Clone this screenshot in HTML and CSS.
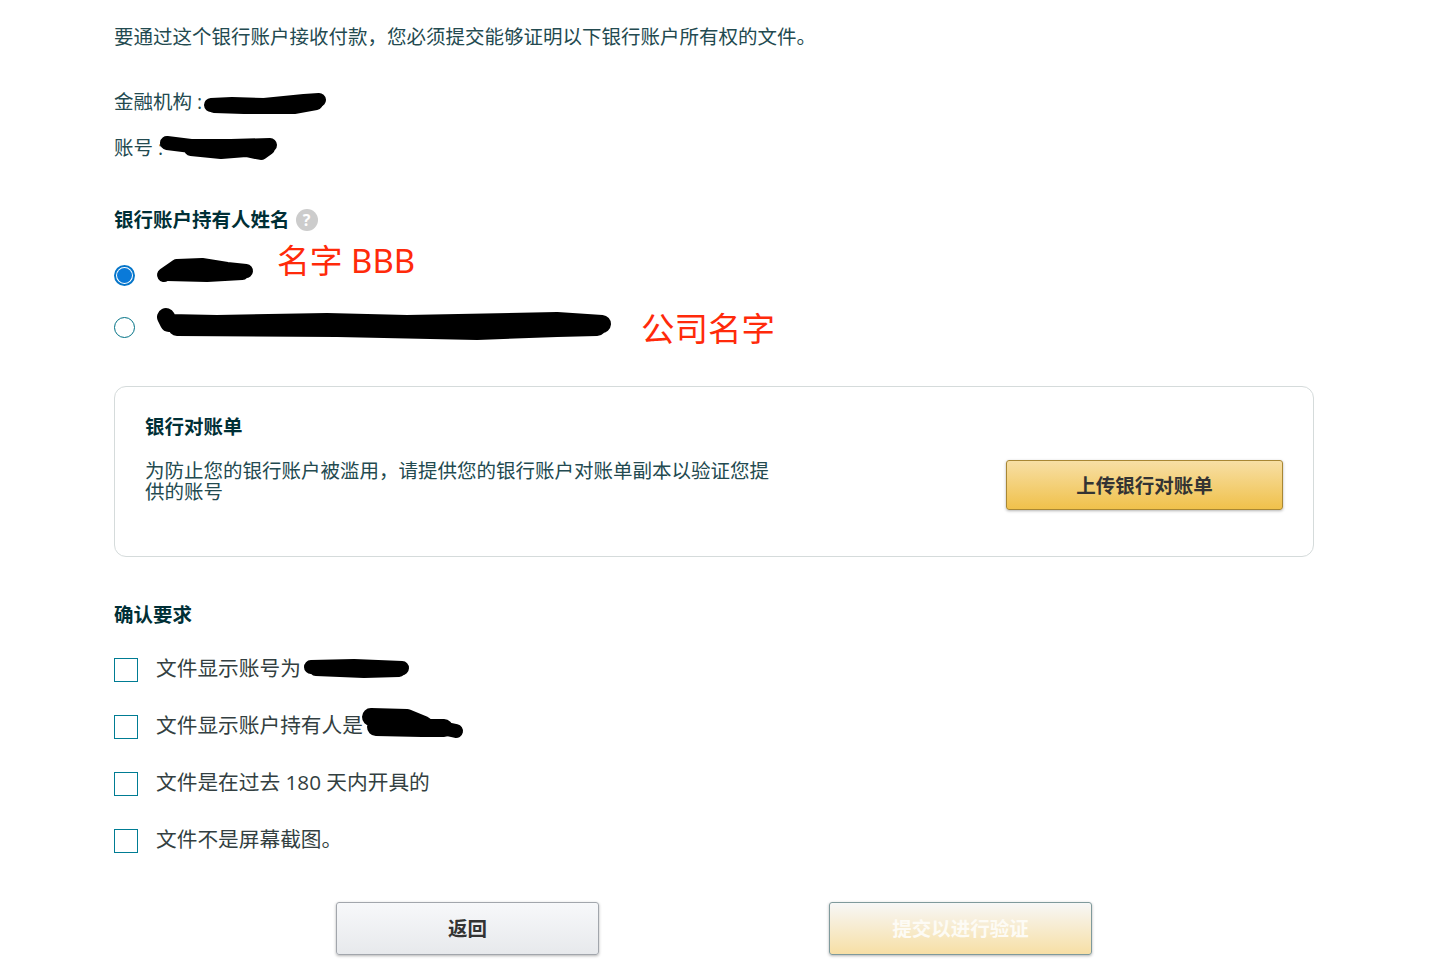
FILE: index.html
```html
<!DOCTYPE html>
<html lang="zh-CN">
<head>
    <meta charset="UTF-8">
    <meta name="viewport" content="width=device-width, initial-scale=1.0">
    <title>银行账户验证</title>
    <link rel="stylesheet" href="styles.css">
</head>
<body>
    <div class="page">
        <p class="intro">要通过这个银行账户接收付款，您必须提交能够证明以下银行账户所有权的文件。</p>

        <div class="info-row institution">
            <span>金融机构 :</span>
            <svg class="scribble" style="margin-left:2px" width="123" height="21" viewBox="0 0 123 21"><path d="M7 13 L28 12 L60 13 L80 11 L100 9 L115 8" /><path d="M10 14 L40 15 L90 15 L112 11" /></svg>
        </div>
        <div class="info-row account">
            <span>账号 :</span>
            <svg class="scribble" style="margin-left:-2px" width="116" height="24" viewBox="0 0 116 24"><path d="M6 7 L30 10 L70 10 L109 9" /><path d="M30 13 L60 16 L85 14 L100 17 L107 12" /></svg>
        </div>

        <h3 class="section-title holder-title">
            银行账户持有人姓名
            <span class="help">?</span>
        </h3>

        <div class="radio-row">
            <input class="radio" type="radio" name="holder" checked>
            <svg class="scribble name-one" width="96" height="24" viewBox="0 0 96 24"><path d="M7 17 L20 8 L45 7 L70 11 L89 13" /><path d="M10 16 L50 17 L85 15" /></svg>
            <span class="note note-one">名字 BBB</span>
        </div>
        <div class="radio-row">
            <input class="radio" type="radio" name="holder">
            <svg class="scribble name-two" width="454" height="32" viewBox="0 0 454 32"><path class="wide" d="M9 9 L12 15 L60 16 L170 14 L250 16 L400 13 L445 16" /><path class="wide" d="M20 19 L180 20 L320 23 L400 20 L440 19" /></svg>
            <span class="note note-two">公司名字</span>
        </div>

        <div class="statement">
            <div class="statement-text">
                <h3 class="section-title">银行对账单</h3>
                <p>为防止您的银行账户被滥用，请提供您的银行账户对账单副本以验证您提供的账号</p>
            </div>
            <button class="btn btn-primary upload">上传银行对账单</button>
        </div>

        <h3 class="section-title confirm-title">确认要求</h3>

        <div class="checks">
            <label class="check-row">
                <input class="check" type="checkbox">
                <span>文件显示账号为</span>
                <svg class="scribble line-one" width="106" height="20" viewBox="0 0 106 20"><path d="M7 9 L50 8 L98 10" /><path d="M12 11 L60 13 L95 12" /></svg>
            </label>
            <label class="check-row">
                <input class="check" type="checkbox">
                <span>文件显示账户持有人是</span>
                <svg class="scribble line-two" width="102" height="30" viewBox="0 0 102 30"><path class="wide" d="M9 9 L45 10 L62 17" /><path class="wide" d="M14 19 L60 20 L82 20" /><path d="M80 20 L94 23" /></svg>
            </label>
            <label class="check-row">
                <input class="check" type="checkbox">
                <span>文件是在过去 180 天内开具的</span>
            </label>
            <label class="check-row">
                <input class="check" type="checkbox">
                <span>文件不是屏幕截图。</span>
            </label>
        </div>

        <div class="actions">
            <button class="btn btn-back">返回</button>
            <button class="btn btn-submit" disabled>提交以进行验证</button>
        </div>
    </div>
</body>
</html>
```

FILE: styles.css
```css
* {
    box-sizing: border-box;
}
body {
    margin: 0;
    background: #ffffff;
    color: #234a50;
    font-family: "Open Sans", "Noto Sans CJK SC", sans-serif;
    font-size: 19.5px;
    line-height: 26px;
    overflow: hidden;
}
.page {
    width: 1200px;
    height: 964px;
    margin-left: 114px;
    padding-top: 24px;
}
p {
    margin: 0;
}
.intro {
    height: 26px;
}
.info-row {
    display: flex;
    align-items: center;
    height: 26px;
}
.institution {
    margin-top: 39px;
}
.account {
    margin-top: 20px;
}
.scribble {
    flex-shrink: 0;
    overflow: visible;
}
.scribble path {
    fill: none;
    stroke: #000000;
    stroke-width: 14px;
    stroke-linecap: round;
    stroke-linejoin: round;
}
.scribble path.wide {
    stroke-width: 18px;
}
.section-title {
    margin: 0;
    color: #002f36;
    font-size: 19.5px;
    font-weight: 700;
    line-height: 26px;
}
.holder-title {
    display: flex;
    align-items: center;
    gap: 6px;
    margin-top: 46px;
}
.help {
    width: 22px;
    height: 22px;
    border-radius: 50%;
    background: #cccccc;
    color: #ffffff;
    font-family: "Open Sans", sans-serif;
    font-size: 16px;
    line-height: 22px;
    text-align: center;
}
.radio-row {
    display: flex;
    align-items: center;
    height: 52px;
}
.holder-title + .radio-row {
    margin-top: 16px;
}
.radio {
    appearance: none;
    flex-shrink: 0;
    width: 21px;
    height: 21px;
    margin: 0 22px 0 0;
    border: 1px solid #007185;
    border-radius: 50%;
    background: #ffffff;
}
.radio:checked {
    border: 2px solid #0575c9;
    padding: 1px;
    background: #0a7ad9;
    background-clip: content-box;
}
.name-one {
    margin-top: -10px;
}
.name-two {
    margin-top: -6px;
}
.note {
    color: #ff2a0a;
    font-family: "Noto Sans", "Noto Sans CJK SC", sans-serif;
    line-height: 40px;
}
.note-one {
    margin: -28px 0 0 24px;
    font-size: 32.8px;
}
.note-two {
    margin: 2px 0 0 30px;
    font-size: 33.5px;
}
.statement {
    display: flex;
    justify-content: space-between;
    align-items: flex-start;
    height: 171px;
    margin-top: 33px;
    padding: 27px 30px 0;
    border: 1px solid #d5dbdb;
    border-radius: 12px;
}
.statement-text {
    width: 630px;
}
.statement-text p {
    margin-top: 20px;
    line-height: 21px;
}
.btn {
    padding-bottom: 3px;
    border-radius: 3px;
    font-family: "Noto Sans CJK SC", sans-serif;
    font-size: 19.5px;
    font-weight: 700;
    box-shadow: 0 1px 3px rgba(0, 0, 0, 0.3);
}
.btn-primary {
    width: 277px;
    height: 50px;
    border: 1px solid #a88734;
    background: linear-gradient(to bottom, #f7dfa5, #f0c14b);
    color: #333333;
}
.upload {
    margin-top: 46px;
}
.confirm-title {
    margin-top: 45px;
}
.checks {
    display: flex;
    flex-direction: column;
    gap: 33px;
    margin-top: 30px;
}
.check-row {
    display: flex;
    align-items: center;
    height: 24px;
    color: #333f41;
    font-size: 20.7px;
}
.check-row span {
    margin-bottom: 4px;
}
.check {
    appearance: none;
    flex-shrink: 0;
    width: 24px;
    height: 24px;
    margin: 0 18px 0 0;
    border: 1px solid #007c93;
    background: #ffffff;
}
.line-one {
    margin: 0 0 4px 3px;
}
.line-two {
    margin: 0 0 9px -1px;
}
.actions {
    display: flex;
    justify-content: center;
    gap: 230px;
    margin-top: 49px;
}
.btn-back,
.btn-submit {
    width: 263px;
    height: 53px;
    padding-bottom: 4px;
}
.btn-back {
    border: 1px solid #a2a6ac;
    background: linear-gradient(to bottom, #f7f8fa, #e7e9ec);
    color: #333333;
}
.btn-submit {
    border: 1px solid #7f9a9c;
    background: linear-gradient(to bottom, #f7f7f7, #f7dfa5);
    color: #fdfbf5;
}
```
